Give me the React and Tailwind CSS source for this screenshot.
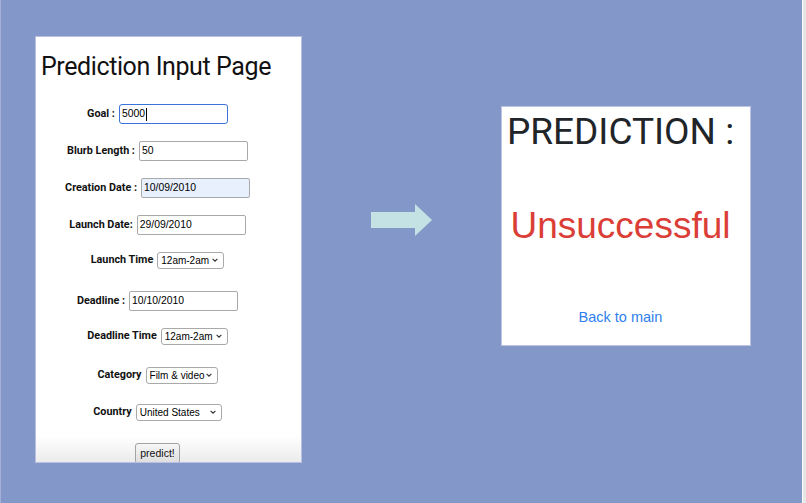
import React from "react";

const label = "font-bold text-[10.8px] text-[#111] mr-[4px] whitespace-nowrap";
const fieldFont = { fontFamily: "'Liberation Sans', Arial, sans-serif" };

function TextBox({ value, width = 109, focused, filled }) {
  const base = "h-[20px] flex items-center pl-[2px] text-[10.4px] text-black rounded-[2px]";
  const skin = focused
    ? "border-[1.5px] border-[#3a74db] rounded-[3px] bg-white"
    : filled
    ? "border border-[#a9a9a9] bg-[#e8f0fe]"
    : "border border-[#a9a9a9] bg-white";
  return (
    <div className={`${base} ${skin}`} style={{ width, ...fieldFont }}>
      <span>{value}</span>
      {focused && <span className="w-px h-[13px] bg-black ml-px" />}
    </div>
  );
}

function FakeSelect({ value, width }) {
  return (
    <div
      className="h-[17px] flex items-center justify-between pl-[3px] pr-[5px] border border-[#a9a9a9] rounded-[3px] bg-white text-[10px] text-black"
      style={{ width, ...fieldFont }}
    >
      <span className="whitespace-nowrap">{value}</span>
      <svg width="6" height="4" viewBox="0 0 6 4" className="shrink-0">
        <path d="M0.6 0.8 L3 3.2 L5.4 0.8" fill="none" stroke="#333" strokeWidth="1.1" />
      </svg>
    </div>
  );
}

function Row({ children, mt }) {
  return (
    <div className={`flex items-center justify-center h-[20px] ${mt}`}>{children}</div>
  );
}

export default function App() {
  return (
    <div
      className="w-[806px] h-[503px] flex bg-[#8497c9] overflow-hidden"
      style={{ fontFamily: "Roboto, 'Liberation Sans', Arial, sans-serif" }}
    >
      <div className="w-px h-full bg-[#a3b0d8]" />
      <div className="flex-1 flex items-start">
        {/* input form panel */}
        <div className="ml-[34px] mt-[36px] w-[267px] h-[427px] border border-[#b9c0e2] overflow-hidden bg-[linear-gradient(to_bottom,#ffffff_calc(100%-26px),#ebebeb)]">
          <h1 className="mt-[15px] ml-[5px] text-[25px] leading-[30px] tracking-[-0.4px] text-[#111]">
            Prediction Input Page
          </h1>
          <div className="mr-[22px] flex flex-col">
            <Row mt="mt-[22px]">
              <span className={label}>Goal :</span>
              <TextBox value="5000" focused />
            </Row>
            <Row mt="mt-[17px]">
              <span className={label}>Blurb Length :</span>
              <TextBox value="50" />
            </Row>
            <Row mt="mt-[17px]">
              <span className={label}>Creation Date :</span>
              <TextBox value="10/09/2010" filled />
            </Row>
            <Row mt="mt-[17px]">
              <span className={label}>Launch Date:</span>
              <TextBox value="29/09/2010" />
            </Row>
            <Row mt="mt-[15px]">
              <span className={label}>Launch Time</span>
              <FakeSelect value="12am-2am" width={67} />
            </Row>
            <Row mt="mt-[21px]">
              <span className={label}>Deadline :</span>
              <TextBox value="10/10/2010" />
            </Row>
            <Row mt="mt-[15px]">
              <span className={label}>Deadline Time</span>
              <FakeSelect value="12am-2am" width={67} />
            </Row>
            <Row mt="mt-[19px]">
              <span className={label}>Category</span>
              <FakeSelect value="Film & video" width={72} />
            </Row>
            <Row mt="mt-[17px]">
              <span className={label}>Country</span>
              <FakeSelect value="United States" width={86} />
            </Row>
            <div className="flex justify-center mt-[21px]">
              <button
                className="h-[21px] px-[4px] border border-[#a3a3a3] rounded-[3px] bg-[linear-gradient(to_bottom,#f6f6f6,#dedede)] text-[10.5px] text-[#111]"
                style={fieldFont}
              >
                predict!
              </button>
            </div>
          </div>
        </div>

        {/* arrow */}
        <svg width="61" height="34" viewBox="0 0 61 34" className="ml-[69px] mt-[203px] shrink-0">
          <path d="M0 9 H44 V1 L61 17 L44 33 V25 H0 Z" fill="#c4e2e3" />
        </svg>

        {/* result panel */}
        <div className="ml-[69px] mt-[106px] w-[250px] h-[240px] border border-[#bcc3e3] bg-white pr-[11px] text-center flex flex-col">
          <h2 className="mt-[3px] text-[37px] leading-[44px] text-[#212529]">PREDICTION :</h2>
          <p className="mt-[51px] text-[37px] leading-[42px] text-[#db3e37]" style={fieldFont}>
            Unsuccessful
          </p>
          <a className="mt-[62px] text-[14.5px] leading-[17px] text-[#2f80ed]" style={fieldFont}>
            Back to main
          </a>
        </div>
      </div>
      <div className="w-[4px] h-full bg-[#e6e6e6] border-l border-white" />
    </div>
  );
}
